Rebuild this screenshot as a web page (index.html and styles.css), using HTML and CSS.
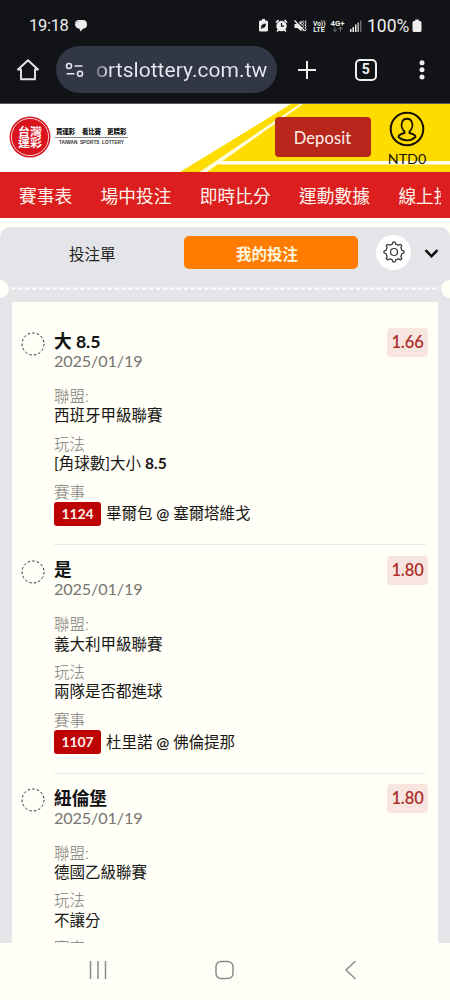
FILE: index.html
```html
<!DOCTYPE html>
<html lang="zh-Hant">
<head>
<meta charset="utf-8">
<title>台灣運彩</title>
<link rel="stylesheet" href="styles.css">
</head>
<body>
<div class="phone">
  <div class="status">
    <span class="clock">19:18</span>
    <svg class="chat" width="14" height="14" viewBox="0 0 14 14"><path d="M4 1h5q4 .2 4 4.500q0 4-4 4.200L6.500 12.500 5.500 9.700Q1 9 1 5 1 1.500 4 1z" fill="#eee"/><path d="M1.500 5q.3-3 3.500-3" stroke="#888" stroke-width=".7" fill="none"/></svg>
    <svg class="status-icons" width="106" height="18" viewBox="0 0 106 18">
      <g fill="#eee">
        <path d="M3 3.500h2V2h3v1.500h1.500Q11 3.500 11 5v8q0 1.500-1.500 1.500h-6Q2 14.500 2 13V5q0-1.500 1-1.500z"/>
        <path d="M4.300 10.500q-.3-3.300 4.200-3.700.3 4-3 3.900L4.300 11.800z" fill="#111317" stroke="#111317" stroke-width=".5"/>
        <circle cx="24.500" cy="9" r="5.200"/>
        <path d="M19 5.500 21.500 3M30 5.500 27.500 3M21.500 13l-1.500 1.500M27.500 13l1.500 1.500" stroke="#eee" stroke-width="1.700"/>
        <path d="M24.500 6v3.200H27" fill="none" stroke="#111317" stroke-width="1.200"/>
        <path d="M37.500 7h3l4-3.500v11L40.500 11h-3z"/>
        <path d="M37.500 2 47.500 12.500" stroke="#111317" stroke-width="1.200"/>
        <path d="M37.500 3.500 47.500 14" stroke="#eee" stroke-width="1.300"/>
        <path d="m46.500 3.500-1 1.500 1 1.500-1 1.500 1 1.500-1 1.500M49 3.500 48 5l1 1.500L48 8l1 1.500-1 1.500 1 1.500-1 1.500" fill="none" stroke="#eee"/>
        <text x="56" y="8.700" textLength="12.500" lengthAdjust="spacingAndGlyphs" class="tiny">Vo))</text>
        <text x="56.300" y="15" textLength="11.500" lengthAdjust="spacingAndGlyphs" class="tiny">LTE</text>
        <text x="73.500" y="8.500" textLength="14" lengthAdjust="spacingAndGlyphs" class="tiny">4G+</text>
        <path d="M78 10v4.500m-2-2 2 2 2-2M83.500 14.500V10m-2 2 2-2 2 2" fill="none" stroke="#70737a" stroke-width="1"/>
        <path d="M93 12h1.500v3H93zM95.500 10H97v5h-1.500zM98 7.500h1.500V15H98z"/>
        <path d="M100.500 5.500h1.400V15h-1.400z" opacity=".8"/><path d="M103 3.500h1.500V15H103z" opacity=".4"/>
      </g>
    </svg>
    <span class="percent">100%</span>
    <svg class="battery" width="10" height="14" viewBox="0 0 10 14"><path d="M3.200.500h3.600V2H8q1.500 0 1.500 1.500v8Q9.500 13 8 13H2Q.5 13 .5 11.500v-8Q.5 2 2 2h1.200z" fill="#eee"/></svg>
  </div>
  <div class="toolbar">
    <svg class="home" width="24" height="24" viewBox="0 0 24 24" fill="none" stroke="#e8e8ea" stroke-width="1.900" stroke-linejoin="round"><path d="M12 2.300 2 11.500h3v9.800h14v-9.800h3z"/></svg>
    <div class="address">
      <svg class="tune" width="20" height="16" viewBox="0 0 20 16" fill="none" stroke="#e5e7ef" stroke-width="1.600"><circle cx="4" cy="4" r="2.500"/><path d="M9.500 4h8M1.500 11.700h8"/><circle cx="15" cy="11.700" r="2.500"/></svg>
      <span class="url">ortslottery.com.tw</span>
    </div>
    <svg class="plus" width="20" height="20" viewBox="0 0 20 20" stroke="#eee" stroke-width="2"><path d="M10 1v18M1 10h18"/></svg>
    <span class="tabs-count">5</span>
    <svg class="dots" width="6" height="20" viewBox="0 0 6 20" fill="#eee"><circle cx="3" cy="2.800" r="2.500"/><circle cx="3" cy="9.800" r="2.500"/><circle cx="3" cy="16.900" r="2.500"/></svg>
  </div>

  <header class="site-header">
    <svg class="stripes" width="450" height="68" viewBox="0 0 450 68"><path d="M180 68 291 0h159v68z" fill="#ffdc00"/><path d="M199.500 68 300 0h3L207 68z" fill="#fffbe0"/><path d="M218 60.500 222 57h228v3.500z" fill="#fffef5"/></svg>
    <svg class="logo" width="125" height="44" viewBox="0 0 125 44">
      <circle cx="22" cy="22" r="20.500" fill="#d9141e"/><circle cx="22" cy="22" r="18.600" fill="none" stroke="#fff" stroke-width=".8"/>
      <text class="seal" x="10" y="20.500" textLength="24" lengthAdjust="spacingAndGlyphs">台灣</text>
      <text class="seal" x="10" y="32" textLength="24" lengthAdjust="spacingAndGlyphs">運彩</text>
      <g class="slogan"><text x="48" y="19.200" textLength="19">買運彩</text><text x="74" y="19.200" textLength="19">看比賽</text><text x="99" y="19.200" textLength="19.500">更精彩</text></g>
      <path d="M47 22.500h73" stroke="#555" stroke-width=".7"/>
      <text class="english" x="51" y="28.600" textLength="65" lengthAdjust="spacingAndGlyphs">TAIWAN&#160; SPORTS&#160; LOTTERY</text>
    </svg>
    <button class="deposit">Deposit</button>
    <div class="account">
      <svg width="36" height="36" viewBox="0 0 36 36" fill="none" stroke="#151000" stroke-width="2"><circle cx="18" cy="18" r="16.300"/><path d="M15.500 20.500c-2.500-2-3.500-6-2.500-9 1.500-5 8.500-5 10 0 1 3 0 7-2.500 9v1.500c3 .7 6 1.500 6 4q-3.500 3.300-8.500 3.300T9.500 26c0-2.500 3-3.300 6-4z" stroke-width="1.800"/></svg>
      <span>NTD0</span>
    </div>
  </header>

  <nav class="menu"><div class="menu-track"><a>賽事表</a><a>場中投注</a><a>即時比分</a><a>運動數據</a><a>線上投注</a></div></nav>

  <main class="slip">
    <div class="slip-tabs">
      <span class="tab">投注單</span>
      <span class="tab active">我的投注</span>
      <span class="gear"><svg width="24" height="24" viewBox="0 0 24 24" fill="none" stroke="#333" stroke-width="1.200" stroke-linejoin="round"><path d="M10.300 4.200 11 2h2l.7 2.200q1.500.3 2.700 1.100l2.100-1 1.300 1.300-1 2.100q.8 1.200 1.100 2.700l2.100.6v2l-2.100.7q-.3 1.500-1.100 2.700l1 2.100-1.300 1.400-2.100-1.100q-1.200.8-2.700 1.100L13 22h-2l-.7-2.100q-1.500-.3-2.700-1.100l-2.100 1.100-1.300-1.400 1-2.100q-.8-1.200-1.100-2.700L2 13v-2l2.100-.6q.3-1.500 1.100-2.700l-1-2.100 1.300-1.300 2.100 1q1.200-.8 2.700-1.100z"/><circle cx="12" cy="12" r="3.500"/></svg></span>
      <svg class="chevron" width="15" height="9" viewBox="0 0 15 9" fill="none" stroke="#111" stroke-width="2.500"><path d="m1.500 1.200 6 6 6-6"/></svg>
    </div>
    <div class="tear"><i></i><svg width="450" height="3"><path d="M11 1.500h428" stroke="#fffef9" stroke-width="2" stroke-dasharray="4.500 2.400"/></svg><i></i></div>
    <div class="card">
      <section class="bet">
        <svg class="ring" width="24" height="24"><circle cx="12" cy="12" r="11"/></svg>
        <div class="details">
          <h2>大 8.5</h2><time>2025/01/19</time>
          <dl><dt>聯盟:</dt><dd>西班牙甲級聯賽</dd><dt>玩法</dt><dd>[角球數]大小 <b>8.5</b></dd><dt>賽事</dt><dd class="match"><span class="code">1124</span>畢爾包 <b>@</b> 塞爾塔維戈</dd></dl>
        </div>
        <span class="odds">1.66</span>
      </section>
      <section class="bet">
        <svg class="ring" width="24" height="24"><circle cx="12" cy="12" r="11"/></svg>
        <div class="details">
          <h2>是</h2><time>2025/01/19</time>
          <dl><dt>聯盟:</dt><dd>義大利甲級聯賽</dd><dt>玩法</dt><dd>兩隊是否都進球</dd><dt>賽事</dt><dd class="match"><span class="code">1107</span>杜里諾 <b>@</b> 佛倫提那</dd></dl>
        </div>
        <span class="odds">1.80</span>
      </section>
      <section class="bet">
        <svg class="ring" width="24" height="24"><circle cx="12" cy="12" r="11"/></svg>
        <div class="details">
          <h2>紐倫堡</h2><time>2025/01/19</time>
          <dl><dt>聯盟:</dt><dd>德國乙級聯賽</dd><dt>玩法</dt><dd>不讓分</dd><dt>賽事</dt></dl>
        </div>
        <span class="odds">1.80</span>
      </section>
    </div>
  </main>

  <footer class="system-nav">
    <svg width="20" height="20" viewBox="0 0 20 20"><path d="M2.500 1v18M10 1v18M17.500 1v18"/></svg>
    <svg width="20" height="20" viewBox="0 0 20 20"><rect x="1" y="1.500" width="17" height="17" rx="5"/></svg>
    <svg width="20" height="20" viewBox="0 0 20 20"><path d="M14.500 1 5 10l9.500 9"/></svg>
  </footer>
</div>
</body>
</html>
```
FILE: styles.css
```css
* { box-sizing: border-box; }
body { margin: 0; background: #fffef7; font-family: Lato, "Noto Sans CJK TC", sans-serif; }
.phone { width: 450px; height: 1000px; overflow: hidden; display: flex; flex-direction: column; }
.phone > * { flex-shrink: 0; }
svg { display: block; flex-shrink: 0; }

.status { height: 46px; background: #111317; color: #eee; display: flex; align-items: center; padding: 5px 0 0 29px; font: 16.5px/20px Roboto, sans-serif; }
.clock { width: 39px; letter-spacing: -.3px; white-space: nowrap; }
.chat { margin-left: 6px; }
.status-icons { margin-left: 169px; }
.tiny { font: bold 7px Roboto, sans-serif; }
.percent { width: 44px; margin-left: 4px; font: 17.5px/20px Roboto, sans-serif; white-space: nowrap; }
.battery { margin-left: 1px; }

.toolbar { height: 58px; background: #111317; border-bottom: 1px solid #5b595d; display: flex; align-items: flex-start; }
.home { margin: 12px 16px 0; }
.address { width: 221px; height: 47px; border-radius: 24px; background: #323746; display: flex; align-items: center; padding-left: 9px; }
.tune { margin-right: 11px; }
.url { font: 21px/26px Roboto, sans-serif; color: transparent; background: linear-gradient(90deg, #777b87, #e8eaf2 14px); background-clip: text; -webkit-background-clip: text; white-space: nowrap; letter-spacing: .05px; padding-top: 1px; }
.plus { margin: 14px 0 0 20px; }
.tabs-count { width: 21.500px; height: 21.500px; margin: 13px 0 0 38px; border: 2px solid #eee; border-radius: 5px; color: #eee; font: bold 14px/17.5px Roboto, sans-serif; text-align: center; }
.dots { margin: 14px 0 0 42px; }

.site-header { height: 68px; display: flex; align-items: flex-start; position: relative; background: #fff; }
.stripes { position: absolute; inset: 0; }
.site-header > :not(.stripes) { position: relative; }
.logo { margin: 11px 0 0 8px; width: 125px; }
.seal { font: bold 11px/11px "Noto Sans CJK TC", sans-serif; fill: #fff; }
.slogan { font: 900 6.500px "Noto Sans CJK TC", sans-serif; fill: #111; }
.english { font: bold 4.500px "Liberation Sans", sans-serif; fill: #333; }
.deposit { margin: 13px 0 0 141.500px; width: 96px; height: 40px; border: 0; border-radius: 4px; background: #b7271b; color: #fff2ec; font: 16.500px/20px Lato, sans-serif; padding: 1px 0 0; letter-spacing: .1px; }
.account { width: 40px; margin: 7px 0 0 16.500px; display: flex; flex-direction: column; align-items: center; font: 14.300px/20px Lato, sans-serif; color: #191300; }
.account span { margin-top: 1.500px; }

.menu { height: 45.500px; background: #dc1e1e; padding: 0 9px 0 19px; }
.menu-track { height: 100%; overflow: hidden; display: flex; gap: 28.500px; align-items: center; color: #fff5ee; font-size: 17.700px; line-height: 24px; white-space: nowrap; }
.menu-track a { flex-shrink: 0; padding-top: 4px; }

.slip { margin-top: 9px; height: 716.500px; overflow: hidden; background: #e4e5e8; border-radius: 10px 10px 0 0; }
.slip-tabs { height: 52px; padding-top: 9px; display: flex; align-items: flex-start; }
.tab { width: 183.500px; height: 33px; padding-left: 1px; text-align: center; color: #222; font-size: 15.500px; line-height: 36px; }
.tab.active { width: 174px; padding: 0 7px 0 0; padding-left: 0; border-radius: 5px; background: #ff7c00; color: #fff6df; font-weight: bold; line-height: 36px; }
.gear { width: 35px; height: 35px; margin-left: 18.500px; margin-top: -1px; border-radius: 50%; background: #fff; display: grid; place-items: center; }
.chevron { margin: 13px 0 0 13px; }
.tear { height: 20px; display: flex; align-items: center; margin: 0 -9px; }
.tear i { width: 18px; height: 18px; border-radius: 50%; background: #fffef7; flex-shrink: 0; }
.tear svg { margin: 0 -9px; }
.card { margin: 3px 12px 0; background: #fffef7; padding: 15.500px 12px 0 10px; height: 700px; }
.bet { height: 228.300px; display: flex; align-items: flex-start; position: relative; }
.ring { margin: 14.500px 8px 0 -1px; fill: none; stroke: #333; stroke-width: 1; stroke-dasharray: 2.600 2; }
.details { flex: 1; height: 228.300px; margin-left: 1px; border-bottom: 1.500px solid #eae9e5; }
h2 { font-size: 17.700px; line-height: 20px; margin: 15px 0 0; color: #111; letter-spacing: -.05px; }
time { display: block; font-size: 16.200px; line-height: 18px; color: #777671; letter-spacing: -.12px; }
dl { margin: 17px 0 0; }
dt, dd { margin: 0; font-size: 15.500px; line-height: 19.300px; white-space: nowrap; }
dt { color: #7e7d78; font-weight: 300; }
dd { color: #171713; margin-bottom: 9.300px; }
.match { display: flex; align-items: center; height: 24px; white-space: pre; letter-spacing: -.05px; }
.match b { font-weight: 600; }
.code { width: 47px; height: 24px; margin-right: 5px; border-radius: 3px; background: #bc0205; color: #fff1e9; font: bold 14px/24px Lato, sans-serif; letter-spacing: -.1px; text-align: center; }
.odds { position: absolute; right: -2px; top: 10.500px; width: 41px; height: 29px; border-radius: 4px; background: #f8e5df; color: #ad302a; font-size: 16.500px; font-weight: 600; letter-spacing: -.1px; line-height: 29px; text-align: center; }

.system-nav { flex: 1; background: #fffef7; display: flex; padding: 17px 0 0 88px; gap: 106.500px; }
.system-nav svg { fill: none; stroke: #8e8d88; stroke-width: 1.500; }
```
